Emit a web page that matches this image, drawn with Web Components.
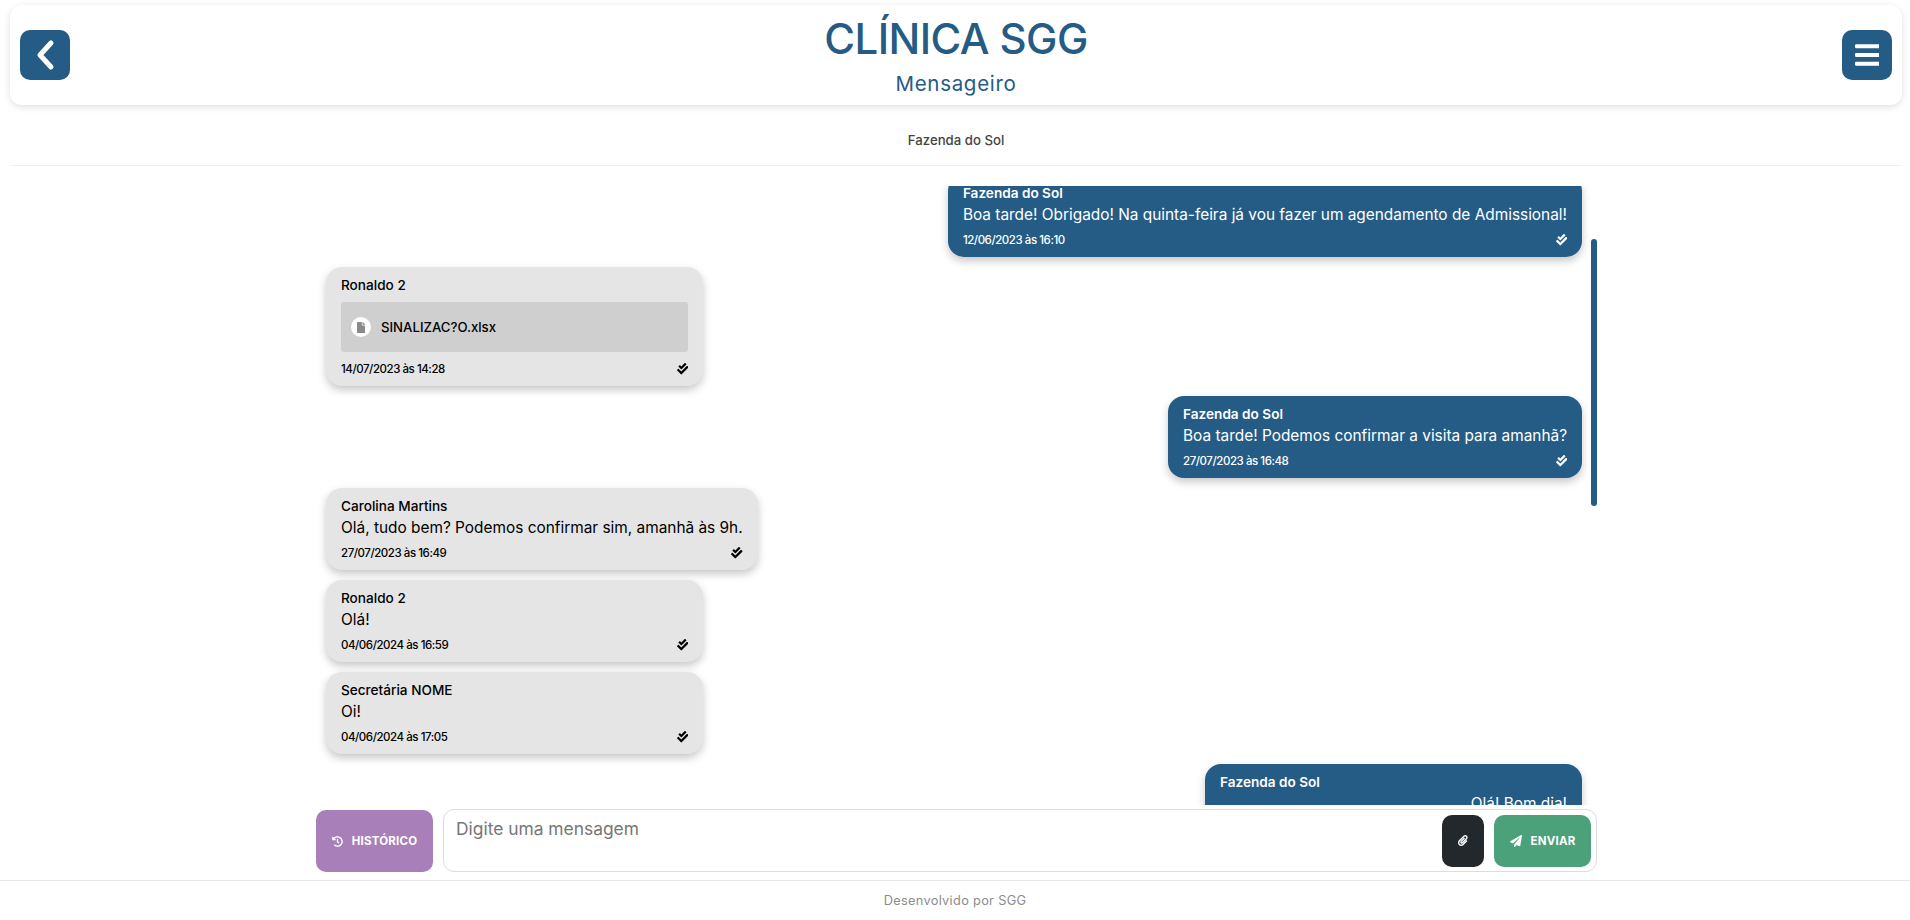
<!DOCTYPE html>
<html lang="pt-BR">
<head>
<meta charset="utf-8">
<title>Clínica SGG - Mensageiro</title>
<style>
  html, body { margin: 0; background: #fff; }
  body { font-family: Inter, "Open Sans", sans-serif; color: #000; }
</style>
</head>
<body>
<chat-app>
  <app-header slot="header" heading="CLÍNICA SGG" subtitle="Mensageiro"></app-header>
  <contact-bar slot="contact">Fazenda do Sol</contact-bar>
  <chat-pane slot="pane">
    <chat-bubble mine name="Fazenda do Sol" date="12/06/2023 às 16:10">Boa tarde! Obrigado! Na quinta-feira já vou fazer um agendamento de Admissional!</chat-bubble>
    <chat-bubble name="Ronaldo 2" date="14/07/2023 às 14:28"><file-chip>SINALIZAC?O.xlsx</file-chip></chat-bubble>
    <chat-bubble mine name="Fazenda do Sol" date="27/07/2023 às 16:48">Boa tarde! Podemos confirmar a visita para amanhã?</chat-bubble>
    <chat-bubble name="Carolina Martins" date="27/07/2023 às 16:49">Olá, tudo bem? Podemos confirmar sim, amanhã às 9h.</chat-bubble>
    <chat-bubble name="Ronaldo 2" date="04/06/2024 às 16:59">Olá!</chat-bubble>
    <chat-bubble name="Secretária NOME" date="04/06/2024 às 17:05">Oi!</chat-bubble>
    <chat-bubble mine end name="Fazenda do Sol" date="04/06/2024 às 17:10">Olá! Bom dia!</chat-bubble>
  </chat-pane>
  <chat-composer slot="composer" placeholder="Digite uma mensagem"></chat-composer>
  <app-footer slot="footer">Desenvolvido por SGG</app-footer>
</chat-app>

<script>
// font awesome 5 solid shapes, used by <fa-icon name="...">
const ICONS = {
  bars: ['0 0 448 512', 'M16 132h416c8.837 0 16-7.163 16-16V76c0-8.837-7.163-16-16-16H16C7.163 60 0 67.163 0 76v40c0 8.837 7.163 16 16 16zm0 160h416c8.837 0 16-7.163 16-16v-40c0-8.837-7.163-16-16-16H16c-8.837 0-16 7.163-16 16v40c0 8.837 7.163 16 16 16zm0 160h416c8.837 0 16-7.163 16-16v-40c0-8.837-7.163-16-16-16H16c-8.837 0-16 7.163-16 16v40c0 8.837 7.163 16 16 16z'],
  check: ['0 0 512 512', 'M505 174.8l-39.6-39.6c-9.4-9.4-24.6-9.4-33.9 0L192 374.7 80.6 263.2c-9.4-9.4-24.6-9.4-33.9 0L7 302.9c-9.4 9.4-9.4 24.6 0 34L175 505c9.4 9.4 24.6 9.4 33.9 0l296-296.2c9.4-9.5 9.4-24.7.1-34zm-324.3 106c6.2 6.3 16.4 6.3 22.6 0l208-208.2c6.2-6.3 6.2-16.4 0-22.6L366.1 4.7c-6.2-6.3-16.4-6.3-22.6 0L192 156.2l-55.4-55.5c-6.2-6.3-16.4-6.3-22.6 0L68.7 146c-6.2 6.3-6.2 16.4 0 22.6l112 112.2z'],
  file: ['0 0 384 512', 'M224 136V0H24C10.7 0 0 10.7 0 24v464c0 13.3 10.7 24 24 24h336c13.3 0 24-10.7 24-24V160H248c-13.2 0-24-10.8-24-24zm160-14.1v6.1H256V0h6.1c6.4 0 12.5 2.5 17 7l97.9 98c4.5 4.5 7 10.6 7 16.9z'],
  plane: ['0 0 512 512', 'M476 3.2L12.5 270.6c-18.1 10.4-15.8 35.6 2.2 43.2L121 358.4l287.3-253.2c5.5-4.9 13.3 2.6 8.6 8.3L176 407v80.5c0 23.6 28.5 32.9 42.5 15.8L282 426l124.6 52.2c14.2 6 30.4-2.9 33-18.2l72-432C515 7.8 493.3-6.8 476 3.2z'],
  history: ['0 0 512 512', 'M504 255.531c.253 136.64-111.18 248.372-247.82 248.468-59.015.042-113.223-20.53-155.822-54.911-11.077-8.94-11.905-25.541-1.839-35.607l11.267-11.267c8.609-8.609 22.353-9.551 31.891-1.984C173.062 425.135 212.781 440 256 440c101.705 0 184-82.311 184-184 0-101.705-82.311-184-184-184-48.814 0-93.149 18.969-126.068 49.932l50.754 50.754c10.08 10.08 2.941 27.314-11.313 27.314H24c-8.837 0-16-7.163-16-16V38.627c0-14.254 17.234-21.393 27.314-11.314l49.372 49.372C129.209 34.136 189.552 8 256 8c136.81 0 247.747 110.78 248 247.531zm-180.912 78.784l9.823-12.63c8.138-10.463 6.253-25.542-4.21-33.679L288 256.349V152c0-13.255-10.745-24-24-24h-16c-13.255 0-24 10.745-24 24v135.651l65.409 50.874c10.463 8.137 25.541 6.253 33.679-4.21z'],
  clip: ['0 0 448 512', 'M43.246 466.142c-58.43-60.289-57.341-157.511 1.386-217.581L254.392 34c44.316-45.332 116.351-45.336 160.671 0 43.89 44.894 43.943 117.329 0 162.276L232.214 383.128c-29.855 30.537-78.633 30.111-107.982-.998-28.275-29.97-27.368-77.473 1.452-106.953l143.743-146.835c6.182-6.314 16.312-6.422 22.626-.241l22.861 22.379c6.315 6.182 6.422 16.312.241 22.626L171.427 319.927c-4.932 5.045-5.236 13.428-.648 18.292 4.372 4.634 11.245 4.711 15.688.165l182.849-186.851c19.613-20.062 19.613-52.725-.011-72.798-19.189-19.627-49.957-19.637-69.154 0L90.39 293.295c-34.763 35.56-35.299 92.12-1.191 127.376 34.01 35.155 88.985 35.2 123.058.146l172.06-176.001c6.177-6.319 16.307-6.434 22.626-.256l22.877 22.362c6.319 6.177 6.434 16.307.256 22.626l-172.06 176.001c-59.604 60.96-156.538 60.918-216.77-1.407z']
};

class FaIcon extends HTMLElement {
  connectedCallback() {
    const [box, d] = ICONS[this.getAttribute('name')];
    const size = this.getAttribute('size') || 12;
    this.attachShadow({ mode: 'open' }).innerHTML = `
      <style>:host { display: inline-flex; line-height: 0; } svg { display: block; }</style>
      <svg xmlns="http://www.w3.org/2000/svg" viewBox="${box}" height="${size}" fill="currentColor"><path d="${d}"/></svg>`;
  }
}
customElements.define('fa-icon', FaIcon);

class ChatApp extends HTMLElement {
  constructor() {
    super();
    this.attachShadow({ mode: 'open' }).innerHTML = `
      <style>
        :host { display: flex; flex-direction: column; height: 920px; overflow: hidden; }
      </style>
      <slot name="header"></slot>
      <slot name="contact"></slot>
      <slot name="pane"></slot>
      <slot name="composer"></slot>
      <slot name="footer"></slot>`;
  }
}
customElements.define('chat-app', ChatApp);

class AppHeader extends HTMLElement {
  connectedCallback() {
    this.attachShadow({ mode: 'open' }).innerHTML = `
      <style>
        :host {
          display: flex; align-items: center; justify-content: space-between;
          box-sizing: border-box; height: 100px; margin: 5px 8px 0 10px; padding: 0 10px;
          background: #fff; border-radius: 12px;
          box-shadow: 0 2px 7px rgba(0,0,0,.13);
        }
        button {
          width: 50px; height: 50px; padding: 0; border: 0; border-radius: 10px;
          background: #255c85; color: #fff;
          display: flex; align-items: center; justify-content: center;
        }
        .titles { text-align: center; color: #255c85; }
        h1 { margin: 0; font-size: 42px; line-height: 50px; font-weight: 500; letter-spacing: -.6px; padding-top: 2px; }
        p { margin: 0; font-size: 20.5px; line-height: 28px; letter-spacing: .7px; padding-top: 6px; }
        .back { stroke: #fff; stroke-width: 5; stroke-linecap: round; stroke-linejoin: round; fill: none; }
      </style>
      <button aria-label="Voltar">
        <svg width="20" height="32" viewBox="0 0 20 32"><path class="back" d="M16 4 L5 16 L16 28"/></svg>
      </button>
      <div class="titles">
        <h1>${this.getAttribute('heading')}</h1>
        <p>${this.getAttribute('subtitle')}</p>
      </div>
      <button aria-label="Menu"><fa-icon name="bars" size="28"></fa-icon></button>`;
  }
}
customElements.define('app-header', AppHeader);

class ContactBar extends HTMLElement {
  constructor() {
    super();
    this.attachShadow({ mode: 'open' }).innerHTML = `
      <style>
        :host {
          display: block; box-sizing: border-box; height: 61px; margin: 0 8px 0 10px; padding-top: 24px;
          border-bottom: 1px solid #f0f0f0;
          text-align: center; font-size: 13.2px; line-height: 22px; font-weight: 500; color: #444;
        }
      </style>
      <slot></slot>`;
  }
}
customElements.define('contact-bar', ContactBar);

class ChatPane extends HTMLElement {
  constructor() {
    super();
    this.attachShadow({ mode: 'open' }).innerHTML = `
      <style>
        :host {
          display: block; position: relative; box-sizing: border-box; flex: none;
          width: 1281px; height: 619px; margin: 20px 0 0 316px; overflow: hidden;
        }
        .list {
          display: flex; flex-direction: column; gap: 10px;
          margin-top: -11px; padding: 0 15px 0 10px;
        }
        /* scroll thumb */
        .thumb {
          position: absolute; right: 0; top: 53px;
          width: 6px; height: 267px; border-radius: 3px; background: #255c85;
        }
      </style>
      <div class="list"><slot></slot></div>
      <div class="thumb"></div>`;
  }
}
customElements.define('chat-pane', ChatPane);

class ChatBubble extends HTMLElement {
  connectedCallback() {
    this.attachShadow({ mode: 'open' }).innerHTML = `
      <style>
        :host {
          display: block; box-sizing: border-box; flex: none; width: fit-content; min-width: 377px;
          padding: 10px 15px 9px; border-radius: 16px;
          background: #e5e5e5; color: #000;
          box-shadow: 0 4px 8px rgba(0,0,0,.22);
          align-self: flex-start;
        }
        :host([mine]) { align-self: flex-end; background: #255c85; color: #fff; }
        .name { font-size: 13.6px; line-height: 17px; font-weight: 500; }
        :host([mine]) .name { font-weight: 600; }
        .body { display: flow-root; margin-top: 2px; font-size: 15.4px; line-height: 21px; font-weight: 400; }
        :host([end]) .body { text-align: right; }
        .meta {
          display: flex; justify-content: space-between; align-items: center;
          margin-top: 7px; font-size: 11.5px; line-height: 16px; font-weight: 500; letter-spacing: -.45px;
        }
      </style>
      <div class="name">${this.getAttribute('name')}</div>
      <div class="body"><slot></slot></div>
      <div class="meta"><span>${this.getAttribute('date')}</span><fa-icon name="check" size="11.5"></fa-icon></div>`;
  }
}
customElements.define('chat-bubble', ChatBubble);

class FileChip extends HTMLElement {
  constructor() {
    super();
    this.attachShadow({ mode: 'open' }).innerHTML = `
      <style>
        :host {
          display: flex; align-items: center; gap: 10px; box-sizing: border-box;
          height: 50px; margin: 6px 0 2px; padding: 0 10px;
          background: #cfcfcf; border-radius: 3px;
          font-size: 13.2px; font-weight: 500; color: #000;
        }
        .dot {
          width: 20px; height: 20px; border-radius: 50%; background: #fff; color: #8a8a8a;
          display: flex; align-items: center; justify-content: center;
        }
      </style>
      <span class="dot"><fa-icon name="file" size="11"></fa-icon></span>
      <slot></slot>`;
  }
}
customElements.define('file-chip', FileChip);

class ChatComposer extends HTMLElement {
  connectedCallback() {
    this.attachShadow({ mode: 'open' }).innerHTML = `
      <style>
        :host {
          display: flex; flex: none; gap: 10px; box-sizing: border-box;
          width: 1281px; height: 63px; margin: 4px 0 8px 316px;
        }
        button {
          display: flex; align-items: center; justify-content: center; gap: 9px;
          padding: 0; border: 0; border-radius: 10px; color: #fff;
          font: 700 11.5px Inter, sans-serif; letter-spacing: .2px;
        }
        .history { width: 117px; margin-top: 1px; background: #a97fb9; }
        .box {
          flex: 1; display: flex; align-items: center; gap: 10px; box-sizing: border-box;
          padding: 5px 5px 5px 12px; background: #fff;
          border: 1px solid #ddd; border-radius: 11px;
        }
        .hint { flex: 1; align-self: flex-start; font-size: 17.4px; line-height: 22px; margin-top: 3px; color: #777; }
        .attach { width: 42px; height: 52px; background: #23282c; }
        .send { width: 97px; height: 52px; background: #4aa17a; }
      </style>
      <button class="history"><fa-icon name="history" size="11"></fa-icon>HISTÓRICO</button>
      <div class="box">
        <div class="hint">${this.getAttribute('placeholder')}</div>
        <button class="attach" aria-label="Anexar"><fa-icon name="clip" size="11"></fa-icon></button>
        <button class="send"><fa-icon name="plane" size="12"></fa-icon>ENVIAR</button>
      </div>`;
  }
}
customElements.define('chat-composer', ChatComposer);

class AppFooter extends HTMLElement {
  constructor() {
    super();
    this.attachShadow({ mode: 'open' }).innerHTML = `
      <style>
        :host {
          display: flex; flex: 1; align-items: center; justify-content: center;
          border-top: 1px solid #e6e6e6; font-size: 12.8px; letter-spacing: .3px; color: #8c8c8c;
        }
      </style>
      <slot></slot>`;
  }
}
customElements.define('app-footer', AppFooter);
</script>
</body>
</html>
